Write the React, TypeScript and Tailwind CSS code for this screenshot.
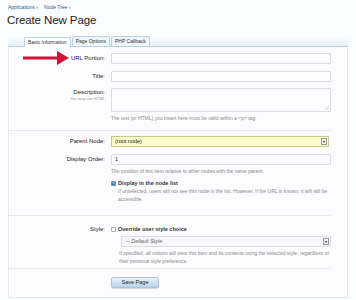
export default function App() {
  const label = 'w-[96px] shrink-0 text-right text-[6px] text-[#222]'
  const hint = 'text-[5px] leading-[8px] text-[#8a8a8a]'
  const input = 'h-[11px] w-[220px] border border-[#dcdce4] bg-[#fdfdff] rounded-[1px]'

  return (
    <div className="relative w-[356px] h-[300px] overflow-hidden bg-[#fbfcfe] font-['Liberation_Sans',Arial,sans-serif]">
      {/* breadcrumb */}
      <div className="flex gap-[6px] px-[8px] pt-[4px] text-[5px] leading-[6px] text-[#2b5f8d]">
        <span>Applications ›</span>
        <span>Node Tree ›</span>
      </div>
      <h1 className="px-[7px] pt-[2px] text-[11.5px] leading-[16px] tracking-[-0.1px] text-[#222]">Create New Page</h1>

      {/* tabs */}
      <div className="mx-[8px] mt-[7px] flex h-[12px] items-end border-b border-[#b7d2e8] bg-gradient-to-b from-[#ffffff] to-[#e6f1fa] pl-[16px]">
        <div className="-mb-px flex h-[10px] items-center rounded-t-[2px] border border-b-0 border-[#b7d2e8] bg-white px-[3px] text-[5px] text-[#333]">
          Basic Information
        </div>
        <div className="ml-[1px] flex h-[10px] items-center rounded-t-[2px] border border-b-0 border-[#b7d2e8] bg-[#eef5fb] px-[3px] text-[5px] text-[#333]">
          Page Options
        </div>
        <div className="ml-[1px] flex h-[10px] items-center rounded-t-[2px] border border-b-0 border-[#b7d2e8] bg-[#eef5fb] px-[3px] text-[5px] text-[#333]">
          PHP Callback
        </div>
      </div>

      {/* form */}
      <div className="mx-[8px] h-[251px] border-x border-b border-[#e4e6ee] bg-[#fcfcfe] pt-[6px]">
        <div className="flex items-center gap-[6px]">
          <div className={label}>URL Portion:</div>
          <div className={input} />
        </div>
        <div className="mt-[7px] flex items-center gap-[6px]">
          <div className={label}>Title:</div>
          <div className={input} />
        </div>
        <div className="mt-[6px] flex gap-[6px]">
          <div className="w-[96px] shrink-0 pt-[1px] text-right">
            <div className="text-[6px] leading-[7px] text-[#222]">Description:</div>
            <div className="text-[4px] leading-[5px] text-[#999]">You may use HTML</div>
          </div>
          <div className="relative h-[24px] w-[220px] rounded-[1px] border border-[#dcdce4] bg-[#fdfdff]">
            <svg className="absolute bottom-[1px] right-[1px]" width="4" height="4" viewBox="0 0 4 4">
              <path d="M4 0L0 4M4 2L2 4" stroke="#aaa" strokeWidth="0.6" />
            </svg>
          </div>
        </div>
        <div className={`${hint} ml-[102px] mt-[2px]`}>
          The text (or HTML) you insert here must be valid within a &lt;p&gt; tag.
        </div>
        <div className="mt-[8px] h-px w-[322px] bg-[#e8eaf0]" />

        <div className="mt-[5px] flex items-center gap-[6px]">
          <div className={label}>Parent Node:</div>
          <div className="flex h-[11px] w-[218px] items-center justify-between border border-[#c9c98a] bg-[#fbfbc8] pl-[3px] pr-[1px] text-[5.5px] text-[#222]">
            <span>(root node)</span>
            <span className="flex h-[7px] w-[6px] items-center justify-center border border-[#999] bg-[#f4f4f4] text-[4px] leading-none">▾</span>
          </div>
        </div>
        <div className="mt-[7px] flex items-center gap-[6px]">
          <div className={label}>Display Order:</div>
          <div className={`${input} flex items-center pl-[3px] text-[5.5px] text-[#222]`}>1</div>
        </div>
        <div className={`${hint} ml-[102px] mt-[2px]`}>
          The position of this item relative to other nodes with the same parent.
        </div>
        <div className="ml-[102px] mt-[4px] flex items-center gap-[2px]">
          <span className="flex h-[5px] w-[5px] items-center justify-center rounded-[1px] border border-[#6a8fc0] bg-[#4a7ec2] text-[4px] leading-none text-white">✓</span>
          <span className="text-[5.5px] font-bold leading-[8px] text-[#333]">Display in the node list</span>
        </div>
        <div className={`${hint} ml-[109px] w-[215px]`}>
          If unselected, users will not see this node in the list. However, if the URL is known, it will still be accessible.
        </div>
        <div className="mt-[12px] h-px w-[322px] bg-[#e8eaf0]" />

        <div className="mt-[9px] flex items-center gap-[6px]">
          <div className={label}>Style:</div>
          <span className="h-[5px] w-[5px] rounded-[1px] border border-[#aaa] bg-white" />
          <span className="-ml-[4px] text-[5.5px] font-bold text-[#333]">Override user style choice</span>
        </div>
        <div className="ml-[112px] mt-[2px] flex h-[11px] w-[210px] items-center justify-between border border-[#dcdce4] bg-[#f7f7f9] pl-[4px] pr-[1px] text-[5.5px] italic text-[#666]">
          <span>-- Default Style</span>
          <span className="flex h-[7px] w-[6px] items-center justify-center border border-[#999] bg-[#f4f4f4] text-[4px] not-italic leading-none text-[#222]">▾</span>
        </div>
        <div className={`${hint} ml-[110px] mt-[2px] w-[215px]`}>
          If specified, all visitors will view this item and its contents using the selected style, regardless of their personal style preference.
        </div>
        <div className="mt-[3px] h-px w-[322px] bg-[#e8eaf0]" />
        <div className="ml-[102px] mt-[8px] flex h-[11px] w-[48px] items-center justify-center rounded-[2px] border border-[#a9c5de] bg-gradient-to-b from-[#e6f0f9] to-[#b9d3ea] text-[5.5px] text-[#222] shadow-[0_1px_1px_rgba(0,0,0,0.15)]">
          Save Page
        </div>
      </div>

      {/* red arrow */}
      <svg className="absolute left-[23px] top-[51px]" width="47" height="14" viewBox="0 0 47 14">
        <path d="M0 5.5H34V0L46 7L34 14V8.5H0Z" fill="#cf1239" />
      </svg>
    </div>
  )
}
